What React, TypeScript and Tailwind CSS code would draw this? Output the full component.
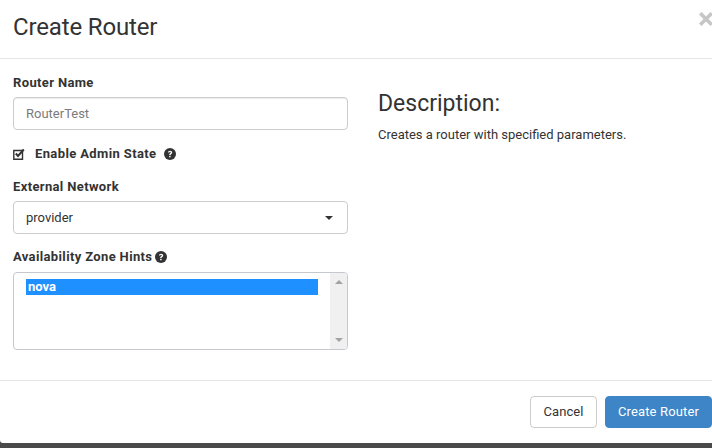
import React from "react";

function Help({ className }: { className: string }) {
  return (
    <svg viewBox="0 0 24 24" className={className} aria-hidden="true">
      <circle cx="12" cy="12" r="12" fill="#333333" />
      <path d="M7.8 9.2C8 6.7 9.8 5.3 12.2 5.3c2.5 0 4.2 1.5 4.2 3.6 0 1.6-.9 2.4-2 3.1-.9.6-1.2.9-1.2 1.8v.4h-2.9v-.7c0-1.6.6-2.4 1.8-3.2.9-.6 1.3-.9 1.3-1.5 0-.7-.5-1.1-1.3-1.1-.9 0-1.4.5-1.5 1.5H7.8Z" fill="#fff" />
      <rect x="10.3" y="15.6" width="2.9" height="2.9" fill="#fff" />
    </svg>
  );
}

export default function App() {
  return (
    <div className="w-[712px] h-[448px] overflow-hidden bg-[#4a4a4a] font-['Roboto',sans-serif] text-[13px] text-[#333333]">
      <div className="h-[443px] bg-white rounded-bl-[3px] flex flex-col">
        <header className="h-[59px] shrink-0 border-b border-[#e5e5e5] pl-[13px] flex justify-between">
          <h1 className="text-[24px] leading-[26px] mt-[14px] font-normal tracking-[-0.15px]">Create Router</h1>
          <svg viewBox="0 0 14 14" className="w-[14px] h-[14px] mt-[12px] mr-[-1px]" aria-hidden="true">
            <path d="M2.5 2.5l9 9M11.5 2.5l-9 9" stroke="#c6c6c6" strokeWidth="3.6" strokeLinecap="square" />
          </svg>
        </header>
        <main className="h-[321px] shrink-0 flex pl-[13px]">
          <section className="w-[335px] shrink-0 pt-[15px]">
            <label className="block font-bold leading-[18px] tracking-[0.36px]">Router Name</label>
            <div className="mt-[5px] h-[33px] border border-[#cccccc] rounded-[4px] pl-[12px] flex items-center text-[#7b7b7b] shadow-[inset_0_1px_1px_rgba(0,0,0,0.075)]">RouterTest</div>
            <div className="mt-[15px] flex items-center h-[18px]">
              <svg viewBox="0 0 12 12" className="w-[12px] h-[12px] shrink-0" aria-hidden="true">
                <path d="M.8 2.5h8.7v8.7H.8z" fill="none" stroke="#333" strokeWidth="1.4" />
                <path d="M2.8 5.5l2.2 2.4 5.8-6.4" fill="none" stroke="#333" strokeWidth="2" />
              </svg>
              <span className="font-bold ml-[10px] tracking-[0.38px]">Enable Admin State</span>
              <Help className="w-[12px] h-[12px] ml-[8px]" />
            </div>
            <label className="block font-bold leading-[18px] mt-[15px] tracking-[0.36px]">External Network</label>
            <div className="mt-[5px] h-[33px] border border-[#cccccc] rounded-[4px] pl-[12px] pr-[14px] flex items-center justify-between">
              <span>provider</span>
              <span className="w-0 h-0 border-x-[4px] border-x-transparent border-t-[4px] border-t-[#333333]" />
            </div>
            <div className="flex items-center leading-[18px] mt-[14px]">
              <label className="font-bold tracking-[0.36px]">Availability Zone Hints</label>
              <Help className="w-[12px] h-[12px] ml-[3px]" />
            </div>
            <div className="mt-[6px] h-[78px] border border-[#c5c9cf] rounded-[4px] flex overflow-hidden">
              <div className="flex-1 pl-[12px] pr-[12px] pt-[6px]">
                <div className="h-[16px] bg-[#1e90ff] text-white font-bold leading-[16px] pl-[2px]">nova</div>
              </div>
              <div className="w-[17px] bg-[#f0f0f0] flex flex-col items-center justify-between py-[7px]">
                <span className="w-0 h-0 border-x-[4px] border-x-transparent border-b-[4px] border-b-[#a3a3a3]" />
                <span className="w-0 h-0 border-x-[4px] border-x-transparent border-t-[4px] border-t-[#a3a3a3]" />
              </div>
            </div>
          </section>
          <section className="pl-[30px] pt-[32px]">
            <h2 className="text-[23px] leading-[26px] font-normal">Description:</h2>
            <p className="mt-[9px] text-[13px] leading-[18px]">Creates a router with specified parameters.</p>
          </section>
        </main>
        <footer className="flex-1 border-t border-[#e5e5e5] flex justify-end items-start pt-[15px] gap-[8px]">
          <button className="w-[67px] h-[32px] bg-white border border-[#cccccc] rounded-[4px] text-[#333333] tracking-[0.1px]">Cancel</button>
          <button className="w-[107px] h-[32px] bg-[#3d85c6] border border-[#3d85c6] rounded-[4px] text-white tracking-[0.15px]">Create Router</button>
        </footer>
      </div>
    </div>
  );
}
